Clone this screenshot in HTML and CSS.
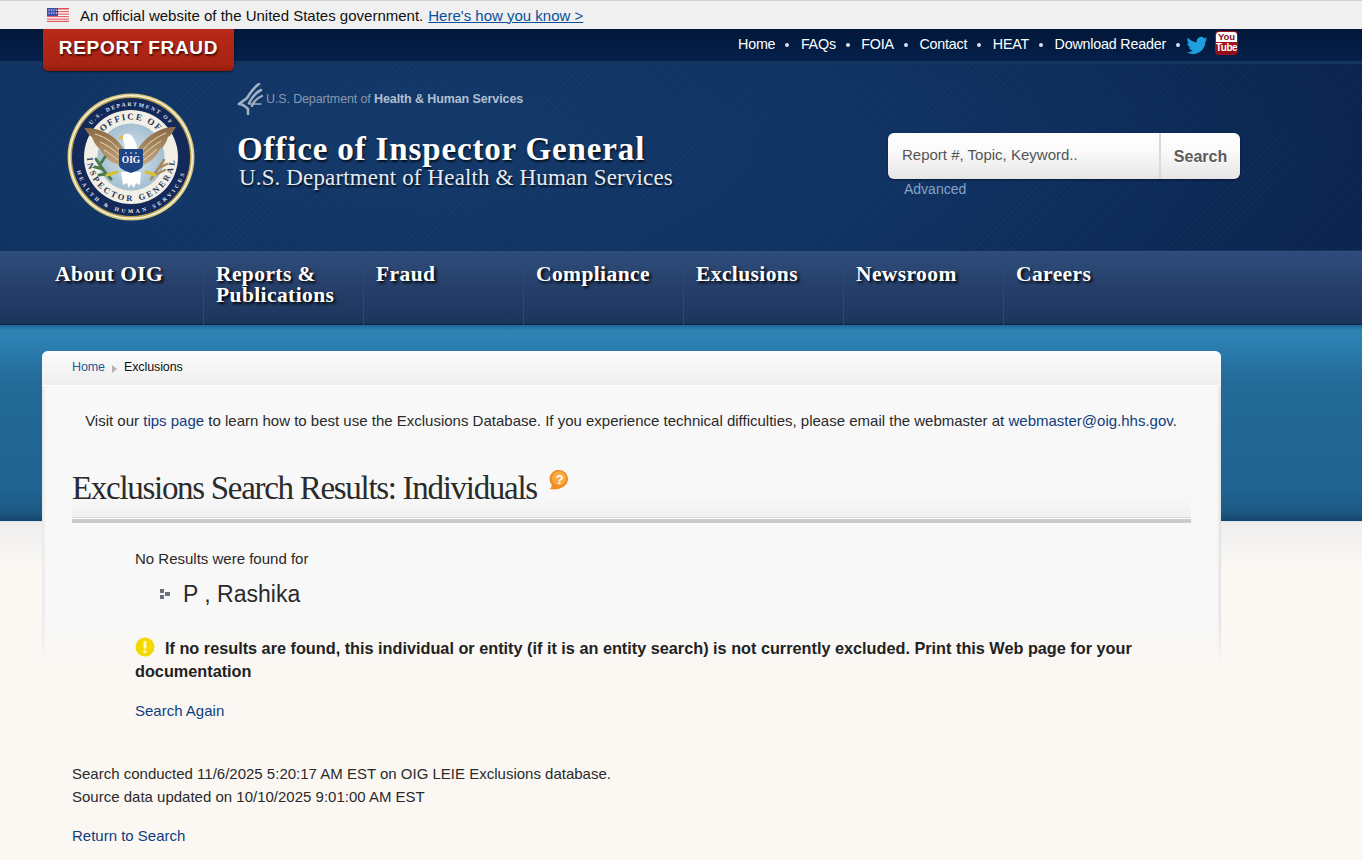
FILE: index.html
```html
<!DOCTYPE html>
<html lang="en">
<head>
<meta charset="utf-8">
<title>Exclusions Search Results: Individuals</title>
<link rel="stylesheet" href="styles.css">
</head>
<body>
<div class="gov-banner">
  <svg class="flag" viewBox="0 0 22 14" aria-hidden="true">
    <rect width="22" height="14" fill="#fff"/>
    <g fill="#e0535a"><rect width="22" height="1.6"/><rect y="3.1" width="22" height="1.1"/><rect y="5.6" width="22" height="1.1"/><rect y="8.1" width="22" height="1.1"/><rect y="10.6" width="22" height="1.1"/><rect y="12.8" width="22" height="1.2"/></g>
    <rect width="11" height="8" fill="#3f4fa8"/>
    <g fill="#dfe3f5"><rect x="1.5" y="1.5" width="1.2" height="1.2"/><rect x="4" y="1.5" width="1.2" height="1.2"/><rect x="6.5" y="1.5" width="1.2" height="1.2"/><rect x="9" y="1.5" width="1" height="1.2"/><rect x="1.5" y="4.5" width="1.2" height="1.2"/><rect x="4" y="4.5" width="1.2" height="1.2"/><rect x="6.5" y="4.5" width="1.2" height="1.2"/><rect x="9" y="4.5" width="1" height="1.2"/></g>
  </svg>
  <span>An official website of the United States government.</span>
  <a href="#" class="gov-link">Here's how you know &gt;</a>
</div>

<div class="topbar">
  <a href="#" class="report-fraud">REPORT FRAUD</a>
  <nav class="util-nav">
    <a href="#">Home</a><i class="dot"></i>
    <a href="#">FAQs</a><i class="dot"></i>
    <a href="#">FOIA</a><i class="dot"></i>
    <a href="#">Contact</a><i class="dot"></i>
    <a href="#">HEAT</a><i class="dot"></i>
    <a href="#">Download Reader</a><i class="dot"></i>
    <svg class="twitter" viewBox="0 0 24 24" aria-hidden="true"><path fill="#1f9fe0" d="M23.95 4.57a10 10 0 0 1-2.82.77 4.96 4.96 0 0 0 2.16-2.72c-.95.55-2 .95-3.13 1.18a4.92 4.92 0 0 0-8.38 4.48C7.69 8.09 4.07 6.13 1.64 3.16a4.82 4.82 0 0 0-.67 2.48c0 1.71.87 3.21 2.19 4.1a4.9 4.9 0 0 1-2.23-.62v.06a4.92 4.92 0 0 0 3.95 4.83 5 5 0 0 1-2.21.08 4.94 4.94 0 0 0 4.6 3.42A9.87 9.87 0 0 1 0 19.54a14 14 0 0 0 7.56 2.21c9.05 0 14-7.5 14-13.98 0-.21 0-.42-.02-.63a9.94 9.94 0 0 0 2.41-2.57z"/></svg>
    <span class="youtube"><b class="yt-you">You</b><b class="yt-tube">Tube</b></span>
  </nav>
</div>

<header class="masthead">
  <svg class="seal" viewBox="-64 -64 128 128" role="img" aria-label="Office of Inspector General seal">
    <defs>
      <path id="arcTopOuter" d="M-51 0A51 51 0 0 1 51 0"/>
      <path id="arcBotOuter" d="M-56 0A56 56 0 0 0 56 0"/>
      <path id="arcTopInner" d="M-37.500 0A37.500 37.500 0 0 1 37.500 0"/>
      <path id="arcBotInner" d="M-44 0A44 44 0 0 0 44 0"/>
      <radialGradient id="discFill"><stop offset="0" stop-color="#d9e6ec"/><stop offset="1" stop-color="#a3bfd1"/></radialGradient>
      <linearGradient id="wingFill" x1="0" y1="0" x2="0" y2="1"><stop offset="0" stop-color="#8a6a44"/><stop offset="1" stop-color="#c2a67c"/></linearGradient>
    </defs>
    <circle r="63.500" fill="#d8c77e"/>
    <circle r="62" fill="#f7f3dc"/>
    <circle r="60.500" fill="#b79f50"/>
    <circle r="59" fill="#12295a"/>
    <circle r="47" fill="#f1efe6"/>
    <circle r="33.500" fill="url(#discFill)"/>
    <text class="seal-outer"><textPath href="#arcTopOuter" startOffset="50%" text-anchor="middle">U.S. DEPARTMENT OF</textPath></text>
    <text class="seal-outer seal-outer-wide"><textPath href="#arcBotOuter" startOffset="50%" text-anchor="middle">HEALTH &amp; HUMAN SERVICES</textPath></text>
    <text class="seal-inner"><textPath href="#arcTopInner" startOffset="50%" text-anchor="middle">OFFICE OF</textPath></text>
    <text class="seal-inner seal-inner-wide"><textPath href="#arcBotInner" startOffset="50%" text-anchor="middle">INSPECTOR GENERAL</textPath></text>
    <path fill="url(#wingFill)" d="M-7-8C-14-20-30-30-47-29-44-26-43-22-39-20-37-14-34-10-31-8-28-1-22 5-12 8Z"/>
    <path fill="url(#wingFill)" d="M7-8C14-20 30-31 45-30 42-26 41-22 37-20 35-14 33-10 29-8 26-1 20 5 12 8Z"/>
    <g fill="none" stroke="#ead9bb" stroke-width="1"><path d="M-12-7C-18-15-26-20-36-23"/><path d="M-12-2C-18-8-24-12-31-15"/><path d="M-13 3C-18-1-22-4-27-7"/><path d="M12-7C18-15 26-20 35-24"/><path d="M12-2C18-8 24-12 30-16"/><path d="M13 3C18-1 22-4 26-8"/></g>
    <path fill="#fff" d="M-6-8C-6-14-9-18-8-21-6-24-1-24 1-21 3-18 6-14 6-8Z"/>
    <path fill="#e6b83c" d="M-8-22-13-19-8-17Z"/>
    <path fill="#fff" d="M-10 15-8 28-4 26-2 31 0 27 3 31 5 26 9 28 10 15Z"/>
    <path fill="#1f4585" d="M-12-8H12V8C12 12 5 14 0 16-5 14-12 12-12 8Z"/>
    <text class="seal-oig" y="6" text-anchor="middle">OIG</text>
    <g fill="#fff"><circle cx="-5" cy="-4" r=".8"/><circle cx="0" cy="-4" r=".8"/><circle cx="5" cy="-4" r=".8"/></g>
    <path fill="none" stroke="#4d7a4c" stroke-width="3" stroke-linecap="round" d="M-20 22C-26 16-30 10-35 2M-28 12-36 10M-24 17-32 18M-30 6-26 0"/>
    <path fill="none" stroke="#a98b62" stroke-width="2.500" stroke-linecap="round" d="M20 22 33 3M24 18 34 13M28 11 36 7"/>
    <path fill="none" stroke="#d9c02c" stroke-width="3" stroke-linecap="round" d="M-24 18-14 15M24 18 15 15"/>
  </svg>
  <div class="titles">
    <div class="hhs-line">
      <svg class="hhs-mark" viewBox="0 0 26 32" aria-hidden="true"><g fill="none" stroke="#9fb0c2" stroke-linecap="round"><path stroke-width="2.600" d="M22 1C16 5 13 10 10 15L2 21"/><path stroke-width="2.600" d="M24 7C18 10 15 14 12 20"/><path stroke-width="2.400" d="M25 13C20 15 17 18 15 23"/><path stroke-width="2.600" d="M2 21C6 21 8 23 11 26L11 31"/><path stroke-width="1.400" d="M12 21 24 21"/></g></svg>
      <span class="hhs-text">U.S. Department of <b>Health &amp; Human Services</b></span>
    </div>
    <h2 class="site-title">Office of Inspector General</h2>
    <p class="site-sub">U.S. Department of Health &amp; Human Services</p>
  </div>
  <div class="search-block">
    <form class="search-box">
      <span class="search-field">Report #, Topic, Keyword..</span>
      <span class="search-btn">Search</span>
    </form>
    <a href="#" class="advanced">Advanced</a>
  </div>
</header>

<nav class="main-nav">
  <a href="#" class="nav-item">About OIG</a>
  <a href="#" class="nav-item">Reports &amp; Publications</a>
  <a href="#" class="nav-item">Fraud</a>
  <a href="#" class="nav-item">Compliance</a>
  <a href="#" class="nav-item">Exclusions</a>
  <a href="#" class="nav-item">Newsroom</a>
  <a href="#" class="nav-item">Careers</a>
</nav>

<main class="page">
  <section class="card">
    <div class="crumbs"><a href="#">Home</a><i class="crumb-arrow"></i><span>Exclusions</span></div>
    <p class="tips">Visit our <a href="#">tips page</a> to learn how to best use the Exclusions Database. If you experience technical difficulties, please email the webmaster at <a href="#">webmaster@oig.hhs.gov</a>.</p>
    <h1 class="heading">Exclusions Search Results: Individuals
      <svg class="help" viewBox="0 0 22 22" aria-hidden="true"><path fill="#ee8f25" d="M11 1a9 9 0 0 1 3 17.500C11 20.500 6 21 1 20c2-1 3-2 2.500-4.500A9 9 0 0 1 11 1Z"/><circle cx="11" cy="9.500" r="7" fill="#f7ab3f"/><text class="help-q" x="11" y="14.500" text-anchor="middle">?</text></svg>
    </h1>
    <div class="results">
      <p class="none-found">No Results were found for</p>
      <p class="name"><svg class="bullet" viewBox="0 0 10 10" aria-hidden="true"><path fill="#6a717b" d="M0 0h4v4H0zM0 6h4v4H0zM5 3h5v4H5z"/></svg>P , Rashika</p>
      <p class="notice"><svg class="warn" viewBox="0 0 20 20" aria-hidden="true"><circle cx="10" cy="10" r="9.500" fill="#f2d900"/><rect x="8.500" y="4" width="3" height="8" rx="1.400" fill="#fff6c0"/><circle cx="10" cy="14.700" r="1.700" fill="#fff6c0"/></svg>If no results are found, this individual or entity (if it is an entity search) is not currently excluded. Print this Web page for your documentation</p>
      <p class="again"><a href="#">Search Again</a></p>
    </div>
    <p class="meta">Search conducted 11/6/2025 5:20:17 AM EST on OIG LEIE Exclusions database.<br>Source data updated on 10/10/2025 9:01:00 AM EST</p>
    <p class="return"><a href="#">Return to Search</a></p>
  </section>
</main>
</body>
</html>
```
FILE: styles.css
```css
* { box-sizing: border-box; }
html, body { margin: 0; height: 860px; overflow: hidden; }
body { font-family: "Liberation Sans", Arial, sans-serif; font-size: 15px; color: #2a2a2a; background: #fbf8f4; }
a { color: #0f3d80; text-decoration: none; }
p, h1, h2 { margin: 0; }

.gov-banner { height: 29px; padding-left: 47px; display: flex; align-items: center; background: #f0f0f0; border-top: 1px solid #cfcfcf; color: #111; font-size: 15px; }
.flag { width: 22px; height: 14px; margin-right: 11px; }
.gov-link { margin-left: 5px; color: #0b4f9c; text-decoration: underline; }

.topbar { height: 35px; padding: 0 124px 0 43px; display: flex; justify-content: space-between; background: linear-gradient(#02173a, #04204a); border-bottom: 3px solid #14355f; }
.report-fraud { position: relative; z-index: 2; width: 191px; height: 42px; flex: none; border-radius: 0 0 5px 5px; background: linear-gradient(#b8291a 0, #a82312 85%, #8f1c0e 100%); box-shadow: 0 1px 2px rgba(0,0,0,.6); color: #fff; font-weight: 700; font-size: 19px; line-height: 37px; letter-spacing: .7px; text-align: center; text-shadow: 1px 2px 2px rgba(0,0,0,.6); }
.util-nav { display: flex; align-items: flex-start; height: 31px; padding-top: 6px; }
.util-nav a { color: #fff; font-size: 14.300px; line-height: 18px; letter-spacing: -.2px; }
.dot { width: 4px; height: 4px; margin: 8px 11.500px 0 10px; background: #d8e0ea; border-radius: 50%; }
.twitter { width: 22px; height: 21px; margin: 0 7px 0 -5.500px; }
.youtube { width: 23px; height: 24px; margin-top: -4px; border-radius: 4px; background: linear-gradient(#fff 0 46%, #a8141c 46%, #8b0f16 100%); display: flex; flex-direction: column; align-items: center; overflow: hidden; border: 1px solid #a8141c; }
.yt-you { font-size: 9.500px; line-height: 10px; color: #7d1016; }
.yt-tube { font-size: 10px; line-height: 12px; letter-spacing: -.4px; color: #fff; }

.masthead { height: 186px; padding: 19px 122px 0 67px; display: flex; background-color: #0d2b59; background-image: repeating-linear-gradient(135deg, rgba(255,255,255,.018) 0 1px, transparent 1px 4px), radial-gradient(ellipse 950px 320px at 30% 45%, #13396a 0, #0f3262 55%, #0a2550 100%); }
.seal { width: 128px; height: 128px; margin-top: 10px; flex: none; }
.seal-outer { font: 700 5.500px "Liberation Serif", serif; fill: #e8ecf3; letter-spacing: 1.800px; }
.seal-outer-wide { letter-spacing: 2.900px; }
.seal-inner { font: 700 9px "Liberation Serif", serif; fill: #26345a; letter-spacing: 1.600px; }
.seal-inner-wide { font-size: 8.500px; letter-spacing: 2.500px; }
.seal-oig { font: 700 9.500px "Liberation Serif", serif; fill: #fff; }
.help-q { font: 700 13px "Liberation Sans", sans-serif; fill: #fff; }
.titles { margin-left: 42px; width: 651px; color: #fff; flex: none; }
.hhs-line { height: 32px; display: flex; align-items: center; margin-bottom: 16px; }
.hhs-mark { width: 26px; height: 32px; margin-right: 3px; }
.hhs-text { color: #8799ad; font-size: 12.500px; letter-spacing: -.13px; }
.hhs-text b { color: #b0bfcf; letter-spacing: -.1px; }
.site-title { font: 700 33px/36px "Liberation Serif", serif; letter-spacing: .85px; text-shadow: 1px 2px 2px rgba(0,0,0,.75); }
.site-sub { font: 400 23px/26px "Liberation Serif", serif; margin: -2px 0 0 2px; letter-spacing: .14px; color: #e6ebf2; text-shadow: 1px 2px 2px rgba(0,0,0,.75); }
.search-block { margin-top: 50px; width: 352px; flex: none; }
.search-box { height: 46px; display: flex; border-radius: 6px; overflow: hidden; background: linear-gradient(#ffffff 0, #fafafa 40%, #e6e6e6 100%); box-shadow: 0 1px 2px rgba(0,0,0,.5); }
.search-field { flex: 1; padding: 13px 0 0 14px; font-size: 15px; line-height: 18px; color: #555; border-right: 2px solid #d9d9d9; }
.search-btn { width: 79px; text-align: center; padding-top: 14px; font-weight: 700; font-size: 16px; line-height: 19px; color: #5c5c5c; text-shadow: 0 1px 0 #fff; }
.advanced { display: block; margin: 1px 0 0 16px; font-size: 14px; line-height: 18px; color: #85a3c7; }

.main-nav { height: 75px; padding-left: 43px; display: flex; background: linear-gradient(#2e4d7c 0, #263f6a 50%, #1c355d 97%, #0e2240 100%); border-top: 1px solid #15315c; }
.nav-item { width: 160px; padding: 13px 12px 0; border-left: 1px solid #294a74; color: #fff; font: 700 21.500px/21px "Liberation Serif", serif; letter-spacing: .4px; text-shadow: 2px 2px 3px #000; }
.nav-item:first-child { border-left: 0; }

.page { padding: 26px 0 0 42px; height: 535px; background: linear-gradient(#1e6a9a 0, #2d85b6 3%, #2b7fb0 9%, #236a98 30%, #1f6390 85%, #1c5a85 95%, #16466c 100%) 0 0 / 100% 196px no-repeat, linear-gradient(#d6e7ef, #d6e7ef) 0 196px / 100% 1px no-repeat, linear-gradient(#eeeeee, #fbf8f4) 0 197px / 100% 46px no-repeat; }
.card { position: relative; width: 1179px; padding: 0 30px; }
.card::before { content: ""; position: absolute; top: 0; left: 0; width: 100%; height: 315px; background: #f8f8f8; border-radius: 6px 6px 0 0; box-shadow: inset 3px 0 3px -1px rgba(0,0,0,.07), inset -3px 0 3px -1px rgba(0,0,0,.1), 0 0 2px rgba(255,255,255,.6); -webkit-mask-image: linear-gradient(#000 0, #000 86%, transparent 100%); mask-image: linear-gradient(to bottom, #000 0, #000 86%, transparent 100%); }
.card > * { position: relative; }
.crumbs { height: 35px; margin: 0 -30px; padding: 7px 0 0 30px; display: flex; align-items: flex-start; font-size: 12.500px; line-height: 18px; border-radius: 6px 6px 0 0; background: linear-gradient(#fbfbfb, #efefef); border-bottom: 1px solid #fcfcfc; color: #111; letter-spacing: -.1px; }
.crumbs a { color: #1d5a94; }
.crumb-arrow { width: 0; height: 0; margin: 7px 7px 0 7px; border-left: 5px solid #b4b4b4; border-top: 4px solid transparent; border-bottom: 4px solid transparent; }
.tips { margin-top: 25px; margin-left: -1px; text-align: center; line-height: 20px; }
.heading { margin-top: 29px; height: 59px; padding-top: 8px; font: 400 33px/40px "Liberation Serif", serif; letter-spacing: -1.300px; color: #2b2b2b; background: linear-gradient(transparent 60%, #f0f0f0 100%); }
.help { width: 22px; height: 22px; margin-left: 4px; vertical-align: 8px; }
.results { padding: 26px 0 0 63px; border-top: 4px solid #cbcbcb; box-shadow: 0 -1px 0 #fff, 0 -2px 0 #d8d8d8; }
.none-found { line-height: 20px; }
.name { margin: 10px 0 0 25px; display: flex; align-items: center; font-size: 23px; line-height: 30px; }
.bullet { width: 10px; height: 10px; margin-right: 13px; }
.notice { margin-top: 28px; font-weight: 700; font-size: 16.250px; line-height: 23px; color: #222; }
.warn { width: 20px; height: 20px; margin-right: 10px; vertical-align: -3px; }
.again { margin-top: 18px; line-height: 20px; }
.meta { margin-top: 41px; line-height: 23px; }
.return { margin-top: 18px; line-height: 20px; }
```
